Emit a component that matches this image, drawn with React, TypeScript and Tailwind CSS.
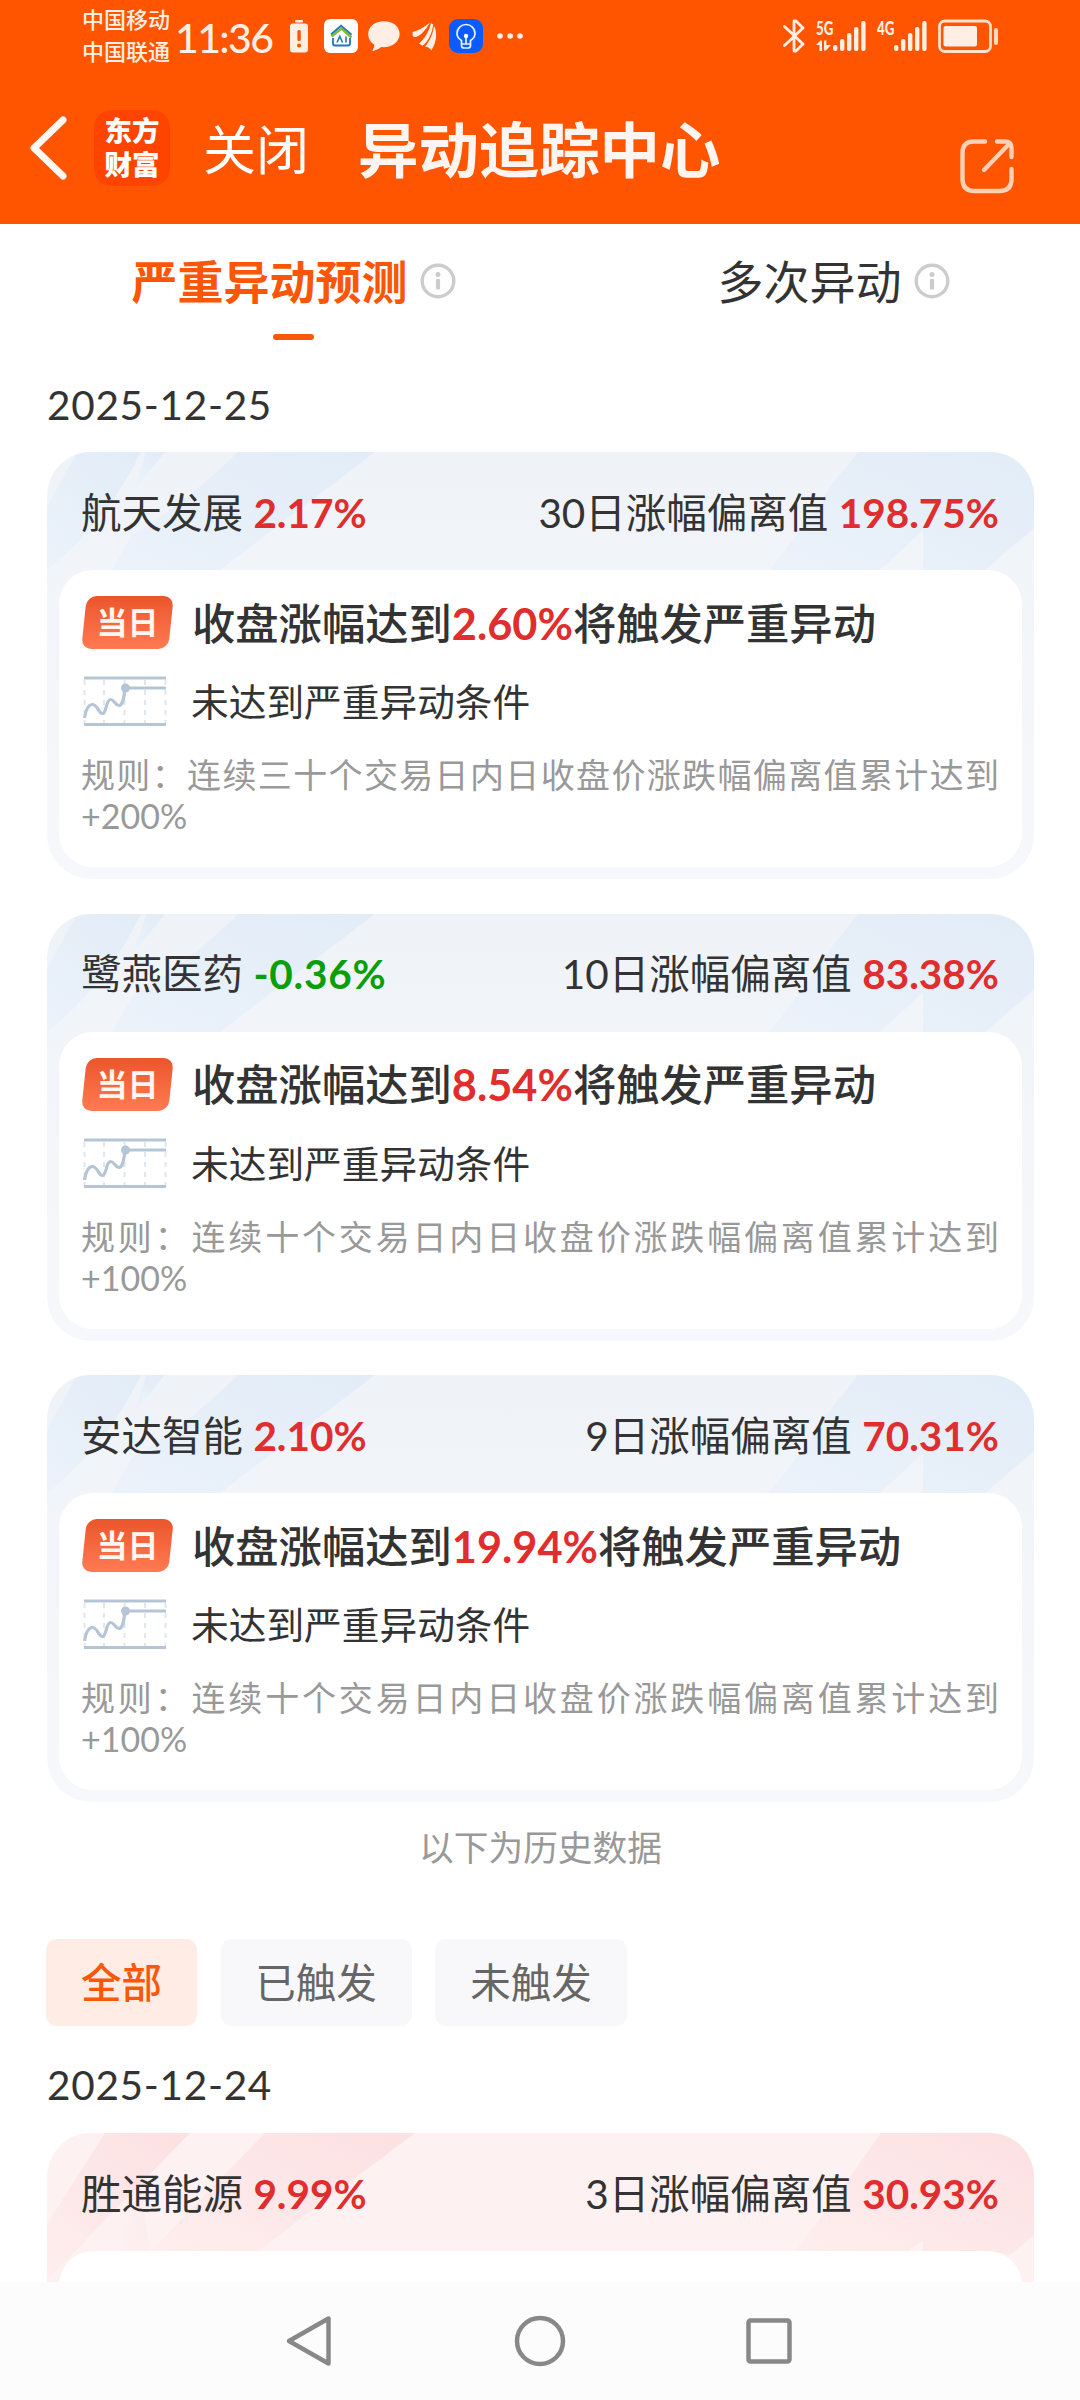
import { ReactNode } from "react";

type Tone = "blue" | "pink";

interface Stock {
  name: string;
  change: string;
  up: boolean;
  days: number;
  deviation: string;
  trigger: string;
  rule: string;
}

const stocks: Stock[] = [
  {
    name: "航天发展",
    change: "2.17%",
    up: true,
    days: 30,
    deviation: "198.75%",
    trigger: "2.60%",
    rule: "规则：连续三十个交易日内日收盘价涨跌幅偏离值累计达到+200%",
  },
  {
    name: "鹭燕医药",
    change: "-0.36%",
    up: false,
    days: 10,
    deviation: "83.38%",
    trigger: "8.54%",
    rule: "规则：连续十个交易日内日收盘价涨跌幅偏离值累计达到+100%",
  },
  {
    name: "安达智能",
    change: "2.10%",
    up: true,
    days: 9,
    deviation: "70.31%",
    trigger: "19.94%",
    rule: "规则：连续十个交易日内日收盘价涨跌幅偏离值累计达到+100%",
  },
];

const history: Stock = {
  name: "胜通能源",
  change: "9.99%",
  up: true,
  days: 3,
  deviation: "30.93%",
  trigger: "",
  rule: "",
};

function SignalBars() {
  return (
    <svg width="33" height="34" viewBox="0 0 33 34" fill="#ffeee4">
      <rect x="0" y="26" width="4.4" height="6" rx="2" />
      <rect x="7" y="20" width="4.4" height="12" rx="2" />
      <rect x="14" y="14" width="4.4" height="18" rx="2" />
      <rect x="21" y="8" width="4.4" height="24" rx="2" />
      <rect x="28.2" y="2" width="4.4" height="30" rx="2" />
    </svg>
  );
}

function StatusBar() {
  return (
    <div className="flex h-[72px] items-center pl-[82px] pr-[81px] text-[#ffeee4]">
      <div className="w-[88px] text-[22px] leading-[32px] font-medium">
        <div>中国移动</div>
        <div>中国联通</div>
      </div>
      <div className="ml-[5px] w-[100px] whitespace-nowrap pt-[3px] text-[41px] leading-[48px] font-medium tracking-[-1.6px]">
        11:36
      </div>
      <svg className="ml-[14px]" width="20" height="34" viewBox="0 0 20 34">
        <rect x="6" y="1" width="8" height="2.6" rx="1" fill="#ffeee4" />
        <rect x="1" y="4.5" width="18" height="29" rx="3" fill="#ffeee4" />
        <rect x="8.4" y="11" width="3.4" height="11" rx="1.5" fill="#ff5500" />
        <circle cx="10.1" cy="26.5" r="2.1" fill="#ff5500" />
      </svg>
      <svg className="ml-[15px]" width="34" height="34" viewBox="0 0 34 34" fill="none">
        <rect width="34" height="34" rx="6" fill="#fff" />
        <path d="M7 15.5 17 6.8l10.5 9" stroke="#1e78b4" strokeWidth="2" />
        <path d="M7.5 17.5 17.5 9.5l10 9" stroke="#7db93c" strokeWidth="2.4" />
        <path d="M9 19v5.5q0 2 2 2h13q2 0 2-2V19" stroke="#1e78b4" strokeWidth="1.8" />
        <path d="m13 23.5 2.8-6 2.8 6M22 17.5v6" stroke="#1e78b4" strokeWidth="1.6" />
      </svg>
      <svg className="ml-[9px]" width="34" height="34" viewBox="0 0 34 34" fill="#ffeee4">
        <path d="M17 2.2C8 2.2 1.2 7.6 1.2 15c0 4.8 2.4 8.3 6 10.6.3 2-.3 3.7-1.5 5.2-.5.7 0 1.3.8 1.1 3.3-.8 5.600-2 7.600-3.800 10.400.9 18.500-4.800 18.500-13.100C32.600 7.600 26 2.200 17 2.200Z" />
      </svg>
      <svg className="ml-[11px]" width="26" height="34" viewBox="0 0 26 34" fill="#ffeee4">
        <path d="M.6 16.500V13C7 11.600 12 8.500 18 3.600c-3.600 6-8.500 13.500-14.400 14.300-1.900.2-2.800-.4-3-1.400Z" />
        <path d="M7 24.500c5.300-4 9.800-11.700 11.900-20.200l2.300 1.200c-.8 8-5 17.400-10.700 21.300Z" />
        <path d="M13 27.500c4.600-4.800 8-12.700 9-20.500 3.200 4.500 3.200 16-2.600 24.300-1.300-2-3.600-3.300-6.400-3.800Z" />
      </svg>
      <svg className="ml-[11px]" width="34" height="34" viewBox="0 0 34 34" fill="none">
        <rect width="34" height="34" rx="9" fill="#0b5cff" />
        <path
          d="M12.5 25v-3.500C9.800 19.800 8 17.500 8 14.500a9 9 0 0 1 18 0c0 3-1.800 5.300-4.500 7V25Zm0 0v1.500q0 2.500 2.500 2.500h4q2.500 0 2.500-2.500V25M17 25v-7"
          stroke="#e8f2ff"
          strokeWidth="1.7"
        />
        <circle cx="17" cy="17" r="2.2" fill="#fff" />
      </svg>
      <svg className="ml-[13px]" width="28" height="34" viewBox="0 0 28 34" fill="#ffeee4">
        <circle cx="4" cy="17" r="2.8" />
        <circle cx="14.2" cy="17" r="2.8" />
        <circle cx="24" cy="17" r="2.8" />
      </svg>

      <svg
        className="ml-auto"
        width="22"
        height="34"
        viewBox="0 0 22 34"
        fill="none"
        stroke="#ffeee4"
        strokeWidth="2.8"
        strokeLinecap="round"
        strokeLinejoin="round"
      >
        <path d="M1.500 7.500 20 25 13 32H11V19.500M1.500 26.500 20 9 13 2H11V14.500" />
      </svg>
      <div className="ml-[11px] flex h-[34px] w-[17px] flex-col justify-between pb-[2px]">
        <span className="block origin-left scale-x-70 pt-[2px] text-[19px] leading-[14px] font-black">5G</span>
        <svg width="16" height="11" viewBox="0 0 16 11" fill="#ffeee4">
          <path d="M0 5 4.500.5H6V11H3.500V5ZM8 .5h2.400V5H15l-5 5.500H8Z" />
        </svg>
      </div>
      <SignalBars />
      <div className="ml-[11px] flex h-[34px] w-[17px] flex-col">
        <span className="block origin-left scale-x-70 pt-[2px] text-[19px] leading-[14px] font-black">4G</span>
      </div>
      <SignalBars />
      <svg className="ml-[11px]" width="61" height="34" viewBox="0 0 61 34">
        <rect x="1.500" y="2" width="51" height="30.500" rx="5.500" fill="none" stroke="#ffe0cc" strokeWidth="2.800" />
        <rect x="5.500" y="7" width="33.500" height="20.500" rx="2" fill="#ffeee4" />
        <rect x="56" y="9" width="4" height="17" rx="2" fill="#ffd9c2" />
      </svg>
    </div>
  );
}

function TitleBar() {
  return (
    <div className="flex h-[152px] items-start text-white">
      <svg className="ml-[28px] mt-[44px]" width="40" height="64" viewBox="0 0 40 64" fill="none">
        <path d="M35 4 6 32l29 28" stroke="#fff8f4" strokeWidth="7" strokeLinecap="round" strokeLinejoin="round" />
      </svg>
      <div className="ml-[26px] mt-[38px] h-[76px] w-[76px] rounded-[17px] bg-[#ff4400] pt-[4px] text-center text-[27.5px] leading-[34px] font-black">
        <div>东方</div>
        <div>财富</div>
      </div>
      <div className="ml-[33px] mt-[42px] text-[53px] leading-[72px]">关闭</div>
      <h1 className="ml-[49px] mt-[42px] text-[60.4px] leading-[72px] font-bold text-[#fff5f0]">异动追踪中心</h1>
      <svg
        className="ml-auto mr-[65px] mt-[66px]"
        width="56"
        height="56"
        viewBox="0 0 56 56"
        fill="none"
        stroke="#ffd0b5"
        strokeWidth="4.4"
        strokeLinecap="round"
        strokeLinejoin="round"
      >
        <path d="M26 3.500H15Q3.500 3.500 3.500 15v26q0 12 12 12h25q12 0 12-12V31M38 3.500h8q6.500 0 6.500 6.500v9M50 6 25 32" />
      </svg>
    </div>
  );
}

function InfoIcon() {
  return (
    <svg className="-mt-[3px]" width="36" height="36" viewBox="0 0 36 36" fill="none">
      <circle cx="18" cy="18" r="15.8" stroke="#cccccc" strokeWidth="3.4" />
      <circle cx="18" cy="11.5" r="2.5" fill="#cccccc" />
      <rect x="15.900" y="16" width="4.2" height="10.5" rx="1" fill="#cccccc" />
    </svg>
  );
}

function Tabs() {
  return (
    <div className="flex h-[150px] pl-[47px]">
      <div className="flex w-[493px] flex-col items-center pt-[28px]">
        <div className="flex items-center gap-[12px]">
          <span className="text-[46px] leading-[60px] font-bold text-[#fb5607]">严重异动预测</span>
          <InfoIcon />
        </div>
        <div className="mt-[22px] h-[6px] w-[41px] rounded-full bg-[#f95808]" />
      </div>
      <div className="flex w-[540px] flex-col items-center pl-[47px] pt-[28px]">
        <div className="flex items-center gap-[12px]">
          <span className="text-[46px] leading-[60px]">多次异动</span>
          <InfoIcon />
        </div>
      </div>
    </div>
  );
}

// Slanted light bands behind the card heading
function CardPattern({ tone }: { tone: Tone }) {
  if (tone === "pink") {
    return (
      <svg className="absolute left-0 top-0" width="987" height="149" viewBox="0 0 987 149">
        <defs>
          <linearGradient id="pinkBand" x1="1" y1="0" x2="0" y2="1">
            <stop offset="0" stopColor="#fce0e2" />
            <stop offset="1" stopColor="#feeeee" />
          </linearGradient>
        </defs>
        <g fill="url(#pinkBand)">
          <path d="M58 0h85L0 147V91Z" />
          <path d="M101 22 73 118h30L96 75Z" opacity=".3" />
          <path d="M218 0h150L211 118H104Z" />
          <path d="M834 0h153v102l-24 20-26-4h-61v-11l-15 11H748q30-38 55-74Z" />
        </g>
      </svg>
    );
  }
  return (
    <svg className="absolute left-0 top-0" width="987" height="149" viewBox="0 0 987 149">
      <defs>
        <linearGradient id="blueBand" x1="1" y1="0" x2="0" y2="1">
          <stop offset="0" stopColor="#e2ecf7" />
          <stop offset="1" stopColor="#ebf2fa" />
        </linearGradient>
      </defs>
      <g fill="url(#blueBand)">
        <path d="M30 0h64Q60 70 0 118V55Z" />
        <path d="M99 0h19L87 38Z" />
        <path d="M191 0h137L173 118H65l20-35Q140 50 191 0Z" />
        <path d="M811 0h176v76l-49 42h-62V78l-43 40H722q36-44 64-87Z" />
      </g>
    </svg>
  );
}

function TodayBadge() {
  return (
    <div className="relative flex h-[53px] w-[91px] items-center justify-center">
      <div className="absolute inset-x-[2px] inset-y-0 -skew-x-6 rounded-[10px] bg-gradient-to-b from-[#eb552b] to-[#ff7a52]" />
      <span className="relative text-[31px] leading-[53px] font-bold text-[#fff6f0]">当日</span>
    </div>
  );
}

function TrendIcon() {
  return (
    <svg width="91" height="52" viewBox="0 0 91 52" fill="none">
      <path
        d="M2.500 4v44M22 4v44M42.500 4v44M63 4v44M83.500 4v44"
        stroke="#dfe6ee"
        strokeWidth="2"
        strokeDasharray="5 5"
      />
      <path d="M2 2h82M2 48.500h82M43 12h41" stroke="#b5c5d6" strokeWidth="3.200" />
      <path
        d="M2.500 42C4 33 7 28.500 10.500 28.500c5 0 6 9 10 9s3.500-14 8-14c4 0 4.500 6 8.500 6s5-9 6-17"
        stroke="#b5c5d6"
        strokeWidth="3.200"
      />
      <circle cx="43.500" cy="12" r="4.500" fill="#b5c5d6" />
    </svg>
  );
}

function StockCard({ stock, tone = "blue", children }: { stock: Stock; tone?: Tone; children?: ReactNode }) {
  return (
    <section
      className={
        tone === "pink"
          ? "relative h-[427px] overflow-hidden rounded-[44px] bg-[#fdf1f1] px-[12px]"
          : "relative h-[427px] overflow-hidden rounded-[44px] bg-gradient-to-b from-[#eff3f8] to-[#f7f8fb] px-[12px]"
      }
    >
      <CardPattern tone={tone} />
      <div className="relative flex h-[118px] items-center justify-between pt-[3px] pr-[23px] pl-[22px] text-[40.5px] leading-[60px]">
        <div>
          {stock.name}{" "}
          <span className={stock.up ? "font-bold text-[#e02d2d]" : "font-bold tracking-[0.8px] text-[#0a9e0a]"}>
            {stock.change}
          </span>
        </div>
        <div>
          {stock.days}日涨幅偏离值 <span className="font-bold text-[#e02d2d]">{stock.deviation}</span>
        </div>
      </div>
      <div className="relative h-[297px] rounded-[34px] bg-white px-[23px] pt-6">{children}</div>
    </section>
  );
}

function StockDetail({ stock }: { stock: Stock }) {
  return (
    <>
      <div className="flex h-[57px] items-center gap-[19px]">
        <TodayBadge />
        <div className="whitespace-nowrap pt-px text-[43.3px] leading-[57px] font-medium">
          收盘涨幅达到<span className="font-bold text-[#e02d2d]">{stock.trigger}</span>将触发严重异动
        </div>
      </div>
      <div className="mt-[25px] flex h-[52px] items-center gap-[18px]">
        <TrendIcon />
        <div className="text-[37.7px] leading-[52px]">未达到严重异动条件</div>
      </div>
      <p className="-ml-px mt-[26px] text-justify text-[34px] leading-[41px] text-[#999999]">{stock.rule}</p>
    </>
  );
}

function Filters() {
  return (
    <div className="-ml-px flex gap-[23.5px] text-[40.5px] leading-[87px] text-[#666666]">
      <button className="h-[87px] w-[151px] rounded-[11px] bg-[#ffede5] font-medium text-[#f95808]">全部</button>
      <button className="h-[87px] w-[191px] rounded-[11px] bg-[#f8f8fb]">已触发</button>
      <button className="h-[87px] w-[192px] rounded-[11px] bg-[#f8f8fb]">未触发</button>
    </div>
  );
}

function NavBar() {
  return (
    <nav className="flex h-[118px] items-center justify-center gap-[175px] bg-[#fcfcfc]">
      <svg width="54" height="54" viewBox="0 0 54 54" fill="none">
        <path d="M44.500 4.500v45L5 27Z" stroke="#888888" strokeWidth="4.500" strokeLinejoin="round" />
      </svg>
      <svg width="54" height="54" viewBox="0 0 54 54" fill="none">
        <circle cx="27" cy="27" r="23" stroke="#888888" strokeWidth="4.500" />
      </svg>
      <svg width="54" height="54" viewBox="0 0 54 54" fill="none">
        <rect x="6.500" y="6.500" width="41" height="41" rx="2" stroke="#888888" strokeWidth="4.500" />
      </svg>
    </nav>
  );
}

export default function App() {
  return (
    <div className="flex h-[2400px] w-[1080px] flex-col overflow-hidden bg-white font-[Lato,'Noto_Sans_CJK_SC',sans-serif] text-[#333333]">
      <header className="h-[224px] shrink-0 bg-[#ff5500]">
        <StatusBar />
        <TitleBar />
      </header>
      <main className="h-[2058px] shrink-0 overflow-hidden">
        <Tabs />
        <div className="pl-[47px] pr-[46px]">
          <div className="h-[78px] pt-px text-[40.5px] leading-[60px] tracking-[0.7px]">2025-12-25</div>
          <div className="flex flex-col gap-[34.5px]">
            {stocks.map((stock) => (
              <StockCard key={stock.name} stock={stock}>
                <StockDetail stock={stock} />
              </StockCard>
            ))}
          </div>
          <div className="h-[137px] pt-[20px] text-center text-[34.7px] leading-[52px] text-[#999999]">
            以下为历史数据
          </div>
          <Filters />
          <div className="h-[107px] pt-[29px] text-[40.5px] leading-[60px] tracking-[0.7px]">2025-12-24</div>
          <StockCard stock={history} tone="pink" />
        </div>
      </main>
      <NavBar />
    </div>
  );
}
